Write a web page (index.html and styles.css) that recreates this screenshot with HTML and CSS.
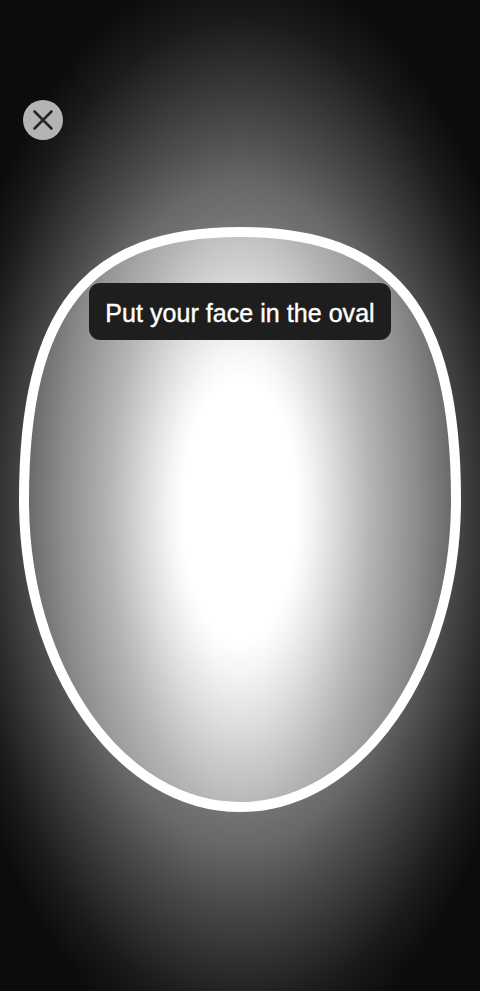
FILE: index.html
```html
<!DOCTYPE html>
<html lang="en">
<head>
    <meta charset="UTF-8">
    <meta name="viewport" content="width=device-width, initial-scale=1.0">
    <title>Face Capture</title>
    <link rel="stylesheet" href="styles.css">
</head>
<body>
    <div class="screen">
        <!-- Top bar with close button -->
        <div class="top-bar">
            <button class="close-btn" type="button" aria-label="Close">
                <svg width="40" height="40" viewBox="0 0 40 40">
                    <path d="M11.5 11.5 L28.5 28.5 M28.5 11.5 L11.5 28.5" stroke="#262626" stroke-width="2.6" stroke-linecap="round" fill="none"/>
                </svg>
            </button>
        </div>

        <!-- Face guide -->
        <div class="oval">
            <svg class="oval-shape" width="442" height="585" viewBox="0 0 442 585">
                <defs>
                    <radialGradient id="ovalFill" gradientUnits="userSpaceOnUse" cx="0" cy="0" r="1" gradientTransform="translate(221 283) scale(260 600)">
                        <stop offset="0" stop-color="#ffffff"/>
                        <stop offset="0.22" stop-color="#ffffff"/>
                        <stop offset="0.27" stop-color="#f5f5f5"/>
                        <stop offset="0.35" stop-color="#e0e0e0"/>
                        <stop offset="0.5" stop-color="#b5b5b5"/>
                        <stop offset="0.69" stop-color="#8a8a8a"/>
                        <stop offset="0.81" stop-color="#6b6b6b"/>
                        <stop offset="1" stop-color="#555555"/>
                    </radialGradient>
                </defs>
                <path d="M5 273 C5 83 67.9 5 221 5 C374.1 5 437 83 437 273 C437 442.6 340.3 580 221 580 C101.7 580 5 442.6 5 273 Z" fill="url(#ovalFill)" stroke="#ffffff" stroke-width="10"/>
            </svg>
            <div class="hint">Put your face in the oval</div>
        </div>
    </div>
</body>
</html>
```

FILE: styles.css
```css
/* General styles */
body {
    margin: 0;
    padding: 0;
    font-family: "Liberation Sans", Arial, sans-serif;
    background: #0a0a0a;
}
.screen {
    height: 991px;
    display: flex;
    flex-direction: column;
    padding-top: 100px;
    box-sizing: border-box;
    overflow: hidden;
    background: radial-gradient(ellipse 300px 550px at 240px 515px,
        #8c8c8c 0%,
        #7a7a7a 50%,
        #686868 60%,
        #4c4c4c 70%,
        #333333 80%,
        #1b1b1b 90%,
        #0c0c0c 100%);
}
.top-bar {
    padding-left: 23px;
    height: 40px;
}
.close-btn {
    width: 40px;
    height: 40px;
    padding: 0;
    border: none;
    border-radius: 50%;
    background-color: #b4b4b4;
    display: flex;
    align-items: center;
    justify-content: center;
    cursor: pointer;
}
.close-btn svg {
    display: block;
}
.oval {
    align-self: center;
    margin-top: 87px;
    width: 442px;
    height: 585px;
    display: grid;
}
.oval-shape,
.hint {
    grid-area: 1 / 1;
}
.oval-shape {
    display: block;
}
.hint {
    align-self: start;
    justify-self: center;
    margin-top: 56px;
    padding: 15px 16px 12px;
    line-height: 30px;
    font-size: 25px;
    color: #fff;
    -webkit-text-stroke: 0.4px #fff;
    letter-spacing: 0.05px;
    background-color: #1e1e1e;
    border-radius: 11px;
    white-space: nowrap;
}
```
